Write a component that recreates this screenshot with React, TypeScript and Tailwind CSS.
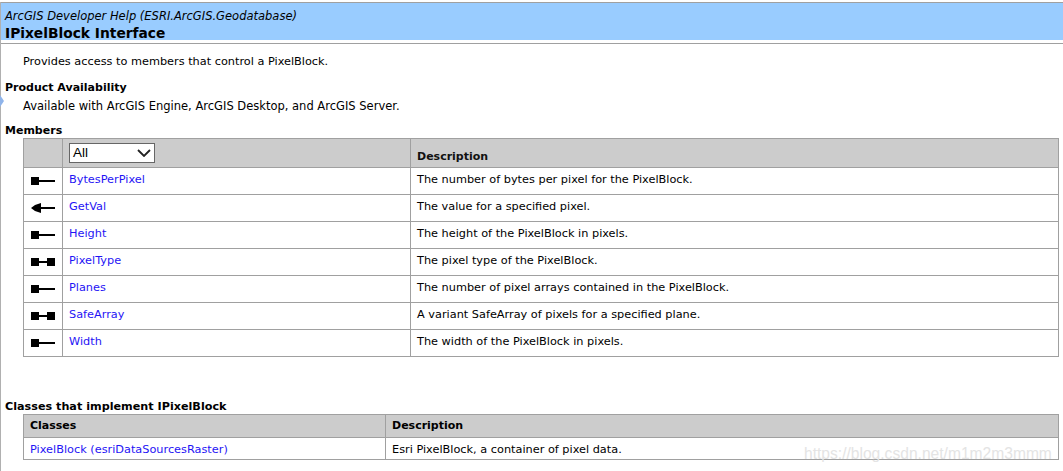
import React from "react";

const members = [
  { name: "BytesPerPixel", icon: "get", desc: "The number of bytes per pixel for the PixelBlock." },
  { name: "GetVal", icon: "method", desc: "The value for a specified pixel." },
  { name: "Height", icon: "get", desc: "The height of the PixelBlock in pixels." },
  { name: "PixelType", icon: "both", desc: "The pixel type of the PixelBlock." },
  { name: "Planes", icon: "get", desc: "The number of pixel arrays contained in the PixelBlock." },
  { name: "SafeArray", icon: "both", desc: "A variant SafeArray of pixels for a specified plane." },
  { name: "Width", icon: "get", desc: "The width of the PixelBlock in pixels." },
];

function MemberIcon({ kind }: { kind: string }) {
  return (
    <svg width="24" height="10" viewBox="0 0 24 10" className="block">
      {kind === "method" ? (
        <path d="M0 5 L4 2 L10 0 V4 H24 V6 H10 V10 L4 8 Z" fill="#000" />
      ) : (
        <>
          <rect x="0" y="1" width="8" height="8" fill="#000" />
          <rect x="8" y="4" width="16" height="2" fill="#000" />
          {kind === "both" && <rect x="16" y="1" width="8" height="8" fill="#000" />}
        </>
      )}
    </svg>
  );
}

export default function App() {
  return (
    <div className="relative h-[471px] w-[1063px] overflow-hidden bg-white pt-[2px] font-['DejaVu_Sans','Liberation_Sans',sans-serif] text-[11.3px] leading-[14px] text-black">
      <div className="ml-px h-[42px] border-y border-[#a0a0a0]">
        <div className="h-[37px] bg-[#99ccff] pl-1 pt-[4px]">
          <div className="h-[18px] text-[11.5px] italic leading-[18px]">
            ArcGIS Developer Help (ESRI.ArcGIS.Geodatabase)
          </div>
          <div className="text-[13.8px] font-bold leading-[16px]">IPixelBlock Interface</div>
        </div>
      </div>

      {/* left page edge */}
      <div className="absolute bottom-0 left-0 top-[2px] w-px bg-[#b0b0b0]" />
      {/* splitter handle */}
      <div className="absolute left-0 top-[95px] h-0 w-0 border-y-[6px] border-l-[4px] border-y-transparent border-l-[#8fb4ea]" />

      <div className="pl-[23px] pt-[11px]">Provides access to members that control a PixelBlock.</div>

      <div className="pl-[5px] pt-[12px] text-[11px] font-bold">Product Availability</div>
      <div className="pl-[23px] pt-[4px] text-[11.5px]">Available with ArcGIS Engine, ArcGIS Desktop, and ArcGIS Server.</div>

      <div className="pl-[5px] pt-[11px] text-[11px] font-bold">Members</div>
      <div className="pl-[23px]">
        <table className="w-[1036px] table-fixed border-collapse">
          <colgroup>
            <col className="w-[39px]" />
            <col className="w-[348px]" />
            <col />
          </colgroup>
          <thead>
            <tr className="h-[29px] bg-[#cccccc]">
              <th className="border border-[#a0a0a0]" />
              <th className="border border-[#a0a0a0] pl-[6px] text-left align-top font-normal">
                <div className="mt-[4px] flex h-[20px] w-[86px] items-center justify-between border border-[#666666] bg-white pl-[3px] pr-[3px] font-['Liberation_Sans',sans-serif] text-[13.5px]">
                  <span>All</span>
                  <svg width="14" height="8" viewBox="0 0 14 8" fill="none">
                    <path d="M1 1 L7 7 L13 1" stroke="#222" strokeWidth="1.8" />
                  </svg>
                </div>
              </th>
              <th className="border border-[#a0a0a0] pl-[6px] pt-[8px] text-left text-[11px] font-bold text-[#111]">Description</th>
            </tr>
          </thead>
          <tbody>
            {members.map((m) => (
              <tr key={m.name} className="h-[27px]">
                <td className="border border-[#a0a0a0] pl-[7px]">
                  <MemberIcon kind={m.icon} />
                </td>
                <td className="border border-[#a0a0a0] pb-[3px] pl-[6px]">
                  <a className="text-[#1f14f5]">{m.name}</a>
                </td>
                <td className="border border-[#a0a0a0] pb-[3px] pl-[6px]">{m.desc}</td>
              </tr>
            ))}
          </tbody>
        </table>
      </div>

      <div className="pl-[5px] pt-[43px] text-[11.2px] font-bold">Classes that implement IPixelBlock</div>
      <div className="pl-[23px]">
        <table className="w-[1036px] table-fixed border-collapse">
          <colgroup>
            <col className="w-[362px]" />
            <col />
          </colgroup>
          <thead>
            <tr className="h-[23px] bg-[#cccccc] text-[11px]">
              <th className="border border-[#a0a0a0] pl-[6px] text-left font-bold">Classes</th>
              <th className="border border-[#a0a0a0] pl-[6px] text-left font-bold">Description</th>
            </tr>
          </thead>
          <tbody>
            <tr className="h-[22px]">
              <td className="border border-[#a0a0a0] pl-[6px] pt-[3px]">
                <a className="text-[#1f14f5]">PixelBlock (esriDataSourcesRaster)</a>
              </td>
              <td className="border border-[#a0a0a0] pl-[6px] pt-[3px]">Esri PixelBlock, a container of pixel data.</td>
            </tr>
          </tbody>
        </table>
      </div>

      {/* watermark */}
      <div className="absolute left-[804px] top-[445px] font-['Liberation_Sans',sans-serif] text-[15.6px] leading-[18px] text-[#e4e4e4]">
        https://blog.csdn.net/m1m2m3mmm
      </div>
    </div>
  );
}
